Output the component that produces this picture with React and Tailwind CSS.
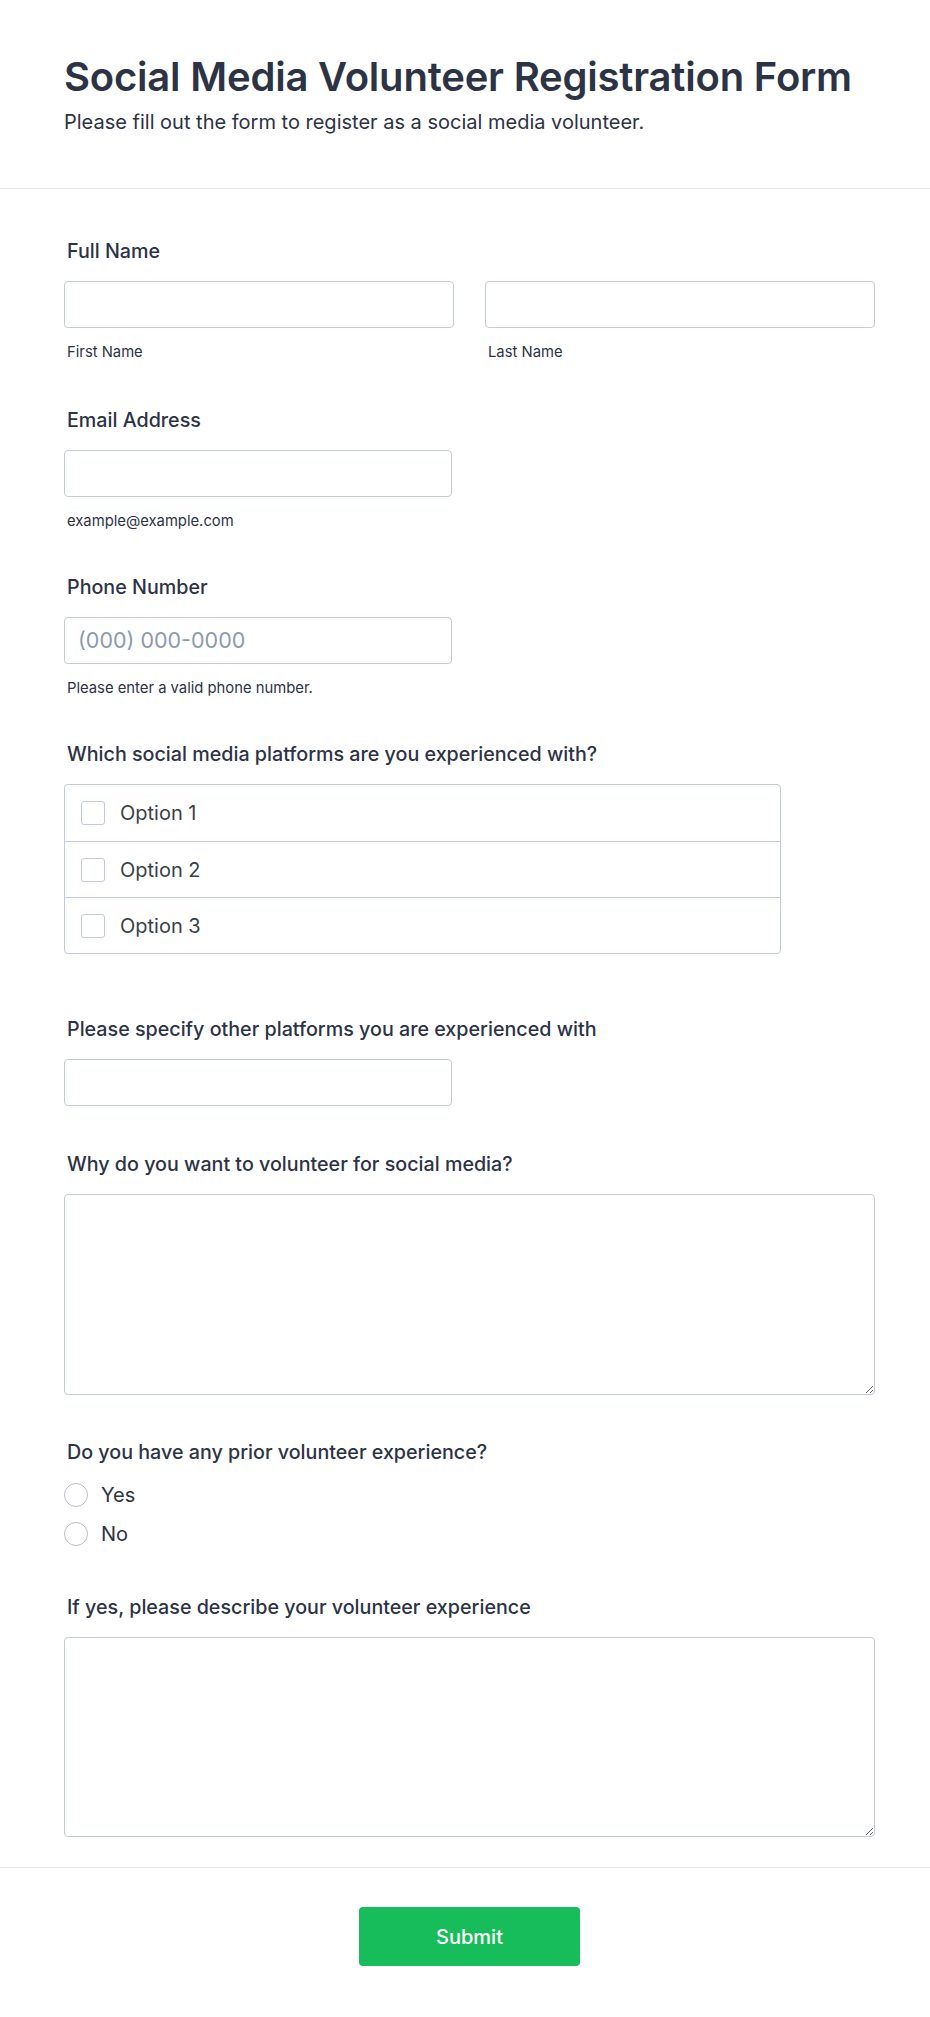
import {useState} from 'react'

const inputCls = 'block h-[47px] rounded-[4px] border border-[#c3cad8] bg-white px-[13px] text-[20px] text-[#2c3345] placeholder:text-[21.5px] placeholder:text-[#8c9aad] outline-none'

const Label = ({children}) => (
    <label className="block pl-[3px] text-[19.7px] leading-[28px] font-medium text-[#2c3345]">{children}</label>
)

const Sub = ({children}) => (
    <div className="mt-[14px] pl-[3px] text-[14.8px] leading-[20px] text-[#2c3345]">{children}</div>
)

const App = () => {
    const [checked, setChecked] = useState({})
    const [prior, setPrior] = useState(null)

    const toggle = (opt) => setChecked(prev => ({...prev, [opt]: !prev[opt]}))

    return (
        <div className="min-h-screen bg-white font-['Inter',sans-serif] text-[#2c3345]">
            <div className="border-b border-[#e3e5ea] pl-[64px] pr-[55px] pt-[55px] pb-[52px]">
                <h1 className="text-[40px] leading-[44px] font-semibold tracking-[-0.2px] text-[#2c3345]">
                    Social Media Volunteer Registration Form
                </h1>
                <p className="mt-[9px] text-[20px] leading-[28px]">
                    Please fill out the form to register as a social media volunteer.
                </p>
            </div>

            <div className="pl-[64px] pr-[55px] pt-[48px]">
                <div>
                    <Label>Full Name</Label>
                    <div className="mt-[16px] grid grid-cols-2 gap-[31px]">
                        <div>
                            <input className={`${inputCls} w-full`}/>
                            <Sub>First Name</Sub>
                        </div>
                        <div>
                            <input className={`${inputCls} w-full`}/>
                            <Sub>Last Name</Sub>
                        </div>
                    </div>
                </div>

                <div className="mt-[44px]">
                    <Label>Email Address</Label>
                    <input className={`${inputCls} mt-[16px] w-[388px]`}/>
                    <Sub>example@example.com</Sub>
                </div>

                <div className="mt-[42px]">
                    <Label>Phone Number</Label>
                    <input className={`${inputCls} mt-[16px] w-[388px]`} placeholder="(000) 000-0000"/>
                    <Sub>Please enter a valid phone number.</Sub>
                </div>

                <div className="mt-[42px]">
                    <Label>Which social media platforms are you experienced with?</Label>
                    <div className="mt-[16px] w-[717px] overflow-hidden rounded-[4px] border border-[#c3cad8]">
                        {['Option 1', 'Option 2', 'Option 3'].map((opt, i) => (
                            <label key={opt}
                                   className={`flex h-[56px] cursor-pointer items-center gap-[15px] px-[16px] ${i > 0 ? 'border-t border-[#c3cad8]' : ''}`}>
                                <span onClick={() => toggle(opt)}
                                      className={`h-[24px] w-[24px] rounded-[3px] border border-[#c3cad8] ${checked[opt] ? 'bg-[#18bd5b]' : 'bg-white'}`}/>
                                <span className="text-[20px] text-[#3b3f48]">{opt}</span>
                            </label>
                        ))}
                    </div>
                </div>

                <div className="mt-[61px]">
                    <Label>Please specify other platforms you are experienced with</Label>
                    <input className={`${inputCls} mt-[16px] w-[388px]`}/>
                </div>

                <div className="mt-[44px]">
                    <Label>Why do you want to volunteer for social media?</Label>
                    <textarea className="mt-[16px] block h-[201px] w-full rounded-[4px] border border-[#c3cad8] p-[12px] text-[20px] outline-none"/>
                </div>

                <div className="mt-[43px]">
                    <Label>Do you have any prior volunteer experience?</Label>
                    <div className="mt-[17px] flex flex-col gap-[15px]">
                        {['Yes', 'No'].map(opt => (
                            <label key={opt} className="flex cursor-pointer items-center gap-[13px]" onClick={() => setPrior(opt)}>
                                <span className={`h-[24px] w-[24px] rounded-full border border-[#b8bdc9] ${prior === opt ? 'border-[7px] border-[#18bd5b]' : ''}`}/>
                                <span className="text-[20px] leading-[24px] text-[#2c3345]">{opt}</span>
                            </label>
                        ))}
                    </div>
                </div>

                <div className="mt-[47px]">
                    <Label>If yes, please describe your volunteer experience</Label>
                    <textarea className="mt-[16px] block h-[200px] w-full rounded-[4px] border border-[#c3cad8] p-[12px] text-[20px] outline-none"/>
                </div>
            </div>

            <div className="mt-[30px] flex justify-center border-t border-[#e3e5ea] pl-[64px] pr-[55px] pt-[39px] pb-[50px]">
                <button className="h-[59px] w-[221px] rounded-[4px] bg-[#18bd5b] text-[20px] font-medium text-white">
                    Submit
                </button>
            </div>
        </div>
    )
}

export default App
